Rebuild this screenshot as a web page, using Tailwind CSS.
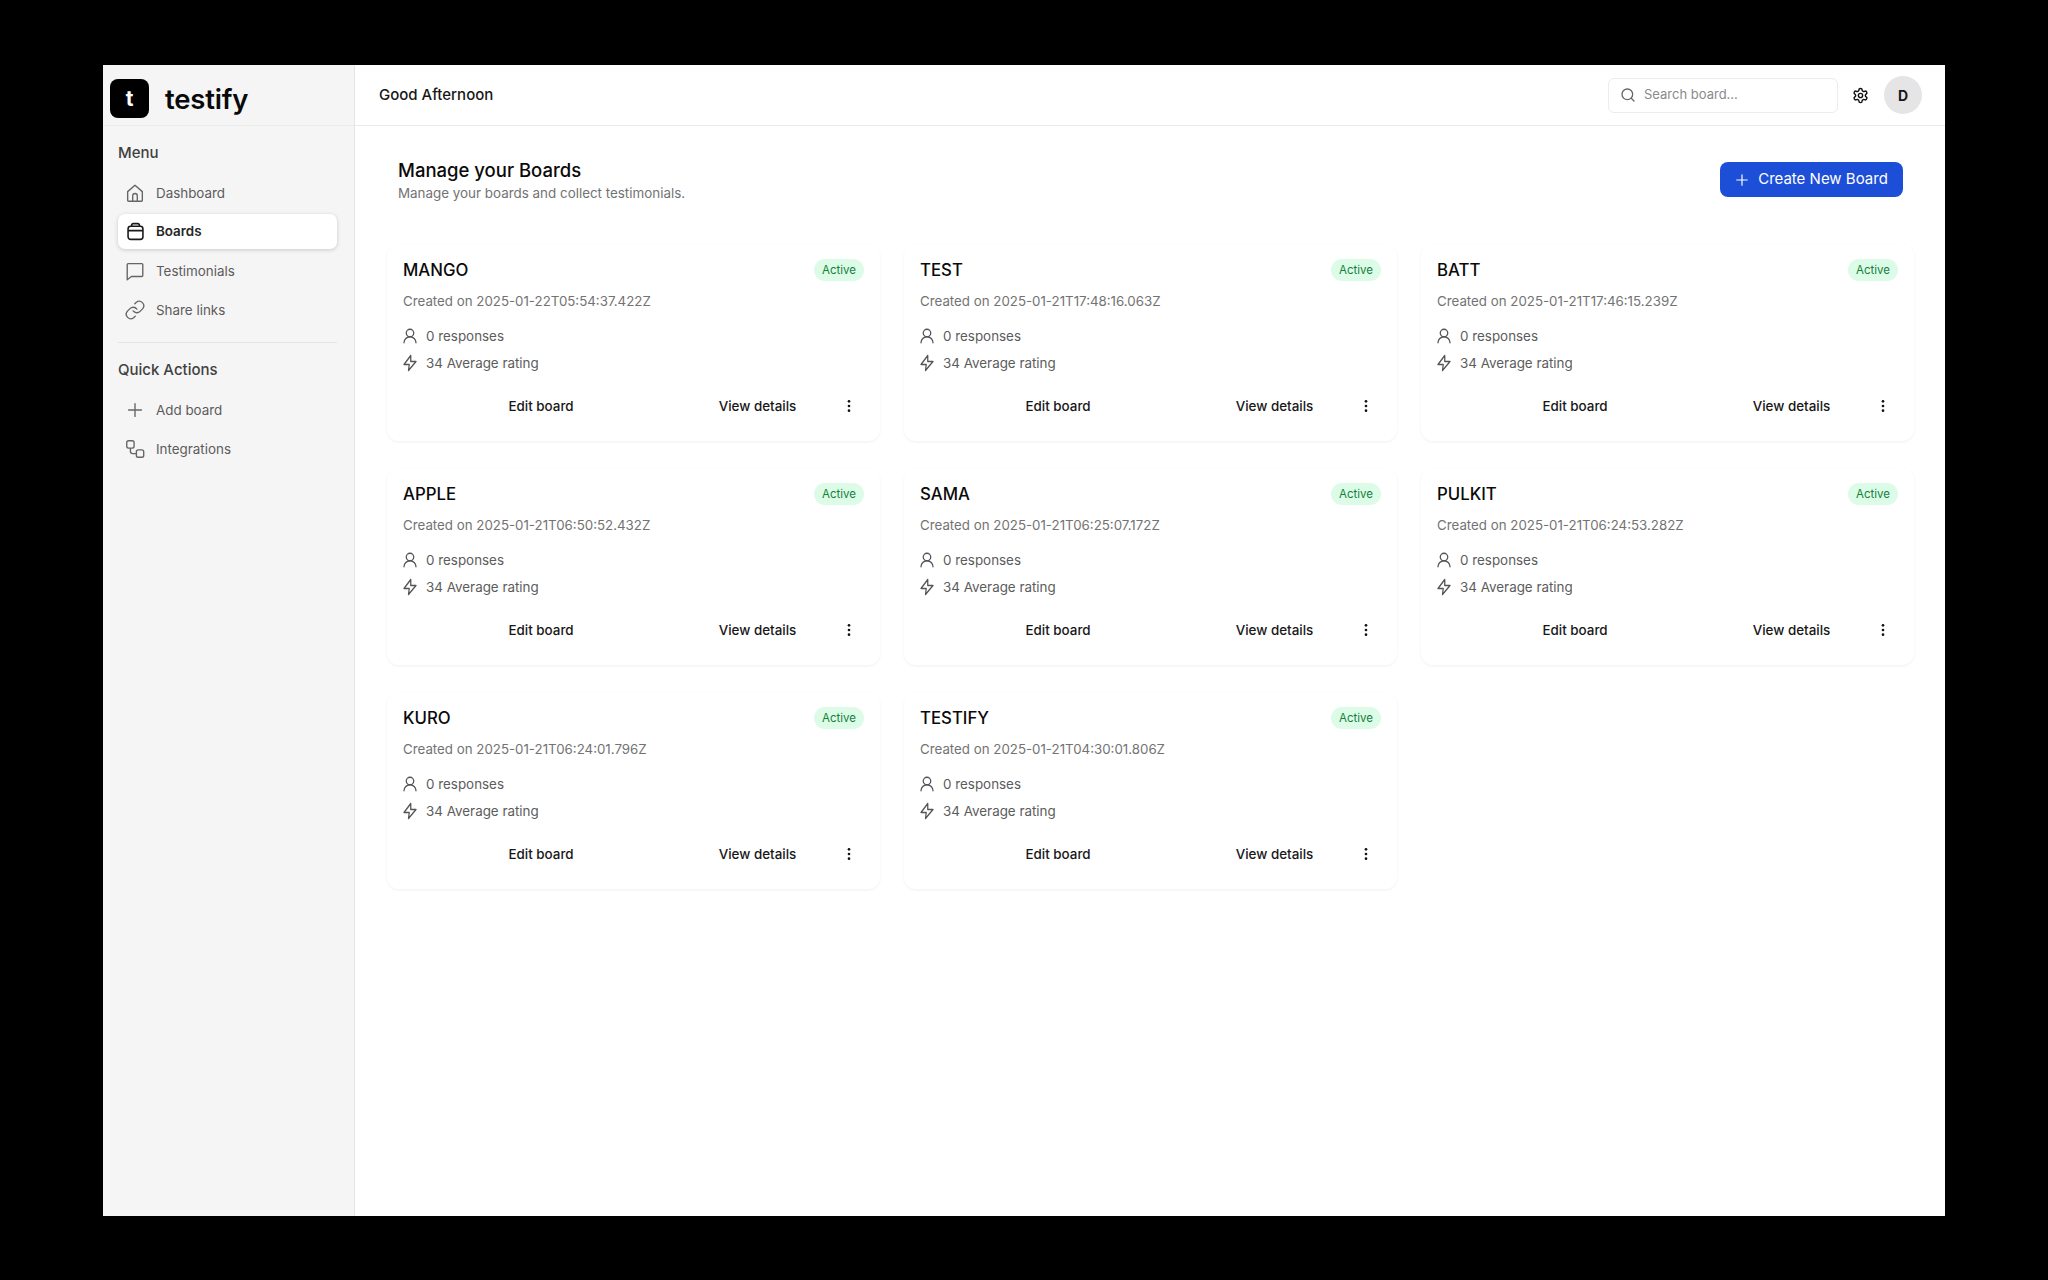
<!DOCTYPE html>
<html lang="en">
<head>
  <meta charset="UTF-8" />
  <title>testify</title>
  <script src="https://cdn.jsdelivr.net/npm/@tailwindcss/browser@4"></script>
</head>
<body class="bg-black h-[1280px] overflow-hidden pt-[65px] pl-[103px] font-['Inter',sans-serif]">
  <div class="flex w-[1842px] h-[1151px] bg-white">
    <!-- SIDEBAR -->
    <aside class="w-[252px] shrink-0 bg-[#f5f5f5] border-r border-[#e4e4e4]">
      <div class="h-[61px] flex items-center pl-[7px] pt-[7px] gap-[16px] border-b border-[#ebebeb]">
        <div class="w-[39px] h-[39px] rounded-[8px] bg-black text-white flex items-center justify-center text-[21px] font-bold">t</div>
        <span class="mt-[2px] text-[27.500px] font-semibold text-[#0a0a0a] tracking-[-0.2px]">testify</span>
      </div>
      <div class="pl-[15px] pr-[17px] pt-[15px]">
        <h3 class="text-[15px] leading-[24px] font-medium text-[#404040]">Menu</h3>
        <nav class="mt-[9px] flex flex-col gap-[1px] text-[13.400px] text-[#5c5c5c]">
          <a class="h-[38px] flex items-center gap-[10px] pl-[6px]">
            <svg class="w-[22px] h-[22px]" viewBox="0 0 24 24" fill="none" stroke="#666" stroke-width="1.500" stroke-linejoin="round"><path d="M4 10.500 12 3.500l8 7V20a1 1 0 0 1-1 1H5a1 1 0 0 1-1-1z"/><path d="M9.500 21v-6a2.500 2.500 0 0 1 5 0v6"/></svg>
            Dashboard
          </a>
          <a class="h-[35px] mt-[1px] mb-[2px] flex items-center gap-[10px] pl-[7px] bg-white rounded-[7px] shadow-[0_1px_4px_rgba(0,0,0,0.18)] font-semibold text-[#262626]">
            <svg class="w-[21px] h-[21px]" viewBox="0 0 24 24" fill="none" stroke="#1a1a1a" stroke-width="1.800" stroke-linejoin="round"><rect x="3.500" y="6" width="17" height="15" rx="3"/><path d="M3.500 11h17M7.500 6V5a2 2 0 0 1 2-2h5a2 2 0 0 1 2 2v1"/></svg>
            Boards
          </a>
          <a class="h-[38px] flex items-center gap-[10px] pl-[6px]">
            <svg class="w-[22px] h-[22px]" viewBox="0 0 24 24" fill="none" stroke="#666" stroke-width="1.500" stroke-linejoin="round"><path d="M3.500 5a1 1 0 0 1 1-1h15a1 1 0 0 1 1 1v12a1 1 0 0 1-1 1H8l-4.500 3.500z"/></svg>
            Testimonials
          </a>
          <a class="h-[38px] flex items-center gap-[10px] pl-[6px]">
            <svg class="w-[22px] h-[22px]" viewBox="0 0 24 24" fill="none" stroke="#666" stroke-width="1.500" stroke-linecap="round" stroke-linejoin="round"><path d="M10 13a5 5 0 0 0 7.500.5l3-3a5 5 0 0 0-7-7l-1.700 1.700"/><path d="M14 11a5 5 0 0 0-7.500-.5l-3 3a5 5 0 0 0 7 7l1.700-1.700"/></svg>
            Share links
          </a>
        </nav>
        <div class="h-px bg-[#e5e5e5] mt-[13px]"></div>
        <h3 class="mt-[15px] text-[15px] leading-[24px] font-medium text-[#404040]">Quick Actions</h3>
        <nav class="mt-[9px] flex flex-col gap-[1px] text-[13.400px] text-[#5c5c5c]">
          <a class="h-[38px] flex items-center gap-[10px] pl-[6px]">
            <svg class="w-[22px] h-[22px]" viewBox="0 0 24 24" fill="none" stroke="#666" stroke-width="1.500" stroke-linecap="round"><path d="M12 5v14M5 12h14"/></svg>
            Add board
          </a>
          <a class="h-[38px] flex items-center gap-[10px] pl-[6px]">
            <svg class="w-[22px] h-[22px]" viewBox="0 0 24 24" fill="none" stroke="#666" stroke-width="1.500" stroke-linejoin="round"><rect x="3" y="3" width="8" height="8" rx="2"/><rect x="13.500" y="13" width="8" height="8" rx="2"/><path d="M7 11v3.500a2.500 2.500 0 0 0 2.500 2.500h4"/></svg>
            Integrations
          </a>
        </nav>
      </div>
    </aside>

    <!-- MAIN -->
    <div class="flex-1 min-w-0">
      <header class="h-[61px] flex items-center pl-[24px] pr-[23px] border-b border-[#ebebeb]">
        <span class="pt-[1px] text-[15px] font-medium text-[#171717]">Good Afternoon</span>
        <div class="ml-auto w-[230px] h-[35px] flex items-center gap-[8px] pl-[11px] border border-[#ececec] rounded-[6px]">
          <svg class="w-[16px] h-[16px]" viewBox="0 0 24 24" fill="none" stroke="#666" stroke-width="2" stroke-linecap="round"><circle cx="11" cy="11" r="8"/><path d="m21 21-4.300-4.300"/></svg>
          <span class="text-[13px] text-[#8a8a8a]">Search board...</span>
        </div>
        <svg class="ml-[14px] w-[17px] h-[17px]" viewBox="0 0 24 24" fill="none" stroke="#111" stroke-width="2" stroke-linejoin="round"><path d="M12.220 2h-.440a2 2 0 0 0-2 2v.180a2 2 0 0 1-1 1.730l-.430.250a2 2 0 0 1-2 0l-.150-.080a2 2 0 0 0-2.730.730l-.220.380a2 2 0 0 0 .730 2.730l.150.100a2 2 0 0 1 1 1.720v.510a2 2 0 0 1-1 1.740l-.150.090a2 2 0 0 0-.730 2.730l.220.380a2 2 0 0 0 2.730.730l.150-.080a2 2 0 0 1 2 0l.430.250a2 2 0 0 1 1 1.730V20a2 2 0 0 0 2 2h.440a2 2 0 0 0 2-2v-.180a2 2 0 0 1 1-1.730l.430-.250a2 2 0 0 1 2 0l.150.080a2 2 0 0 0 2.730-.730l.220-.390a2 2 0 0 0-.730-2.730l-.150-.080a2 2 0 0 1-1-1.740v-.500a2 2 0 0 1 1-1.740l.150-.090a2 2 0 0 0 .730-2.730l-.220-.380a2 2 0 0 0-2.730-.730l-.150.080a2 2 0 0 1-2 0l-.430-.250a2 2 0 0 1-1-1.730V4a2 2 0 0 0-2-2z"/><circle cx="12" cy="12" r="3"/></svg>
        <div class="ml-[15px] w-[38px] h-[38px] rounded-full bg-[#e5e5e5] flex items-center justify-center text-[14px] font-bold text-[#171717]">D</div>
      </header>

      <main class="pl-[32px] pr-[31px]">
        <div class="flex items-start pl-[11px] pr-[11px] pt-[32px]">
          <div>
            <h1 class="text-[18.500px] leading-[24px] font-medium text-[#0a0a0a]">Manage your Boards</h1>
            <p class="mt-[1px] text-[13.400px] leading-[20px] text-[#737373]">Manage your boards and collect testimonials.</p>
          </div>
          <button class="ml-auto mt-[4px] h-[35px] w-[183px] rounded-[8px] bg-[#1d4ed8] text-white text-[15px] flex items-center justify-center gap-[9px]">
            <svg class="w-[14px] h-[14px]" viewBox="0 0 24 24" fill="none" stroke="white" stroke-width="2" stroke-linecap="round"><path d="M12 3v18M3 12h18"/></svg>
            Create New Board
          </button>
        </div>

        <div id="grid" class="mt-[41px] grid grid-cols-3 gap-x-[24px] gap-y-[27px]"></div>
      </main>
    </div>
  </div>

  <script>
    const boards = [
      ["MANGO", "2025-01-22T05:54:37.422Z"],
      ["TEST", "2025-01-21T17:48:16.063Z"],
      ["BATT", "2025-01-21T17:46:15.239Z"],
      ["APPLE", "2025-01-21T06:50:52.432Z"],
      ["SAMA", "2025-01-21T06:25:07.172Z"],
      ["PULKIT", "2025-01-21T06:24:53.282Z"],
      ["KURO", "2025-01-21T06:24:01.796Z"],
      ["TESTIFY", "2025-01-21T04:30:01.806Z"]
    ];

    // Render board cards
    document.getElementById("grid").innerHTML = boards.map(([name, date]) => `
      <div class="h-[197px] rounded-[12px] shadow-[0_1px_3px_rgba(0,0,0,0.06)] px-[16px] pt-[12px]">
        <div class="flex items-center justify-between">
          <h2 class="text-[16.800px] leading-[28px] font-medium text-[#0a0a0a]">${name}</h2>
          <span class="h-[22px] px-[8px] rounded-full bg-[#dcfce7] text-[11.500px] leading-[22px] text-[#15803d]">Active</span>
        </div>
        <p class="mt-[7px] text-[13.300px] leading-[20px] text-[#737373]">Created on ${date}</p>
        <div class="mt-[15px] flex items-center gap-[7px] text-[13.400px] leading-[20px] text-[#5c5c5c]">
          <svg class="w-[18px] h-[18px] ml-[-2px]" viewBox="0 0 24 24" fill="none" stroke="#555" stroke-width="1.700" stroke-linecap="round"><circle cx="12" cy="8" r="5"/><path d="M20 21a8 8 0 0 0-16 0"/></svg>
          0 responses
        </div>
        <div class="mt-[7px] flex items-center gap-[7px] text-[13.400px] leading-[20px] text-[#5c5c5c]">
          <svg class="w-[18px] h-[18px] ml-[-2px]" viewBox="0 0 24 24" fill="none" stroke="#555" stroke-width="1.700" stroke-linejoin="round"><path d="M13 2 4 14h7l-1 8 10-12h-7z"/></svg>
          34 Average rating
        </div>
        <div class="mt-[23px] flex items-center text-[13.400px] leading-[20px] font-medium text-[#171717]">
          <span class="w-[276px] text-center">Edit board</span>
          <span class="w-[157px] text-center">View details</span>
          <svg class="ml-[5px] w-[16px] h-[16px]" viewBox="0 0 24 24" fill="#111"><circle cx="12" cy="5" r="2"/><circle cx="12" cy="12" r="2"/><circle cx="12" cy="19" r="2"/></svg>
        </div>
      </div>
    `).join("");
  </script>
</body>
</html>
